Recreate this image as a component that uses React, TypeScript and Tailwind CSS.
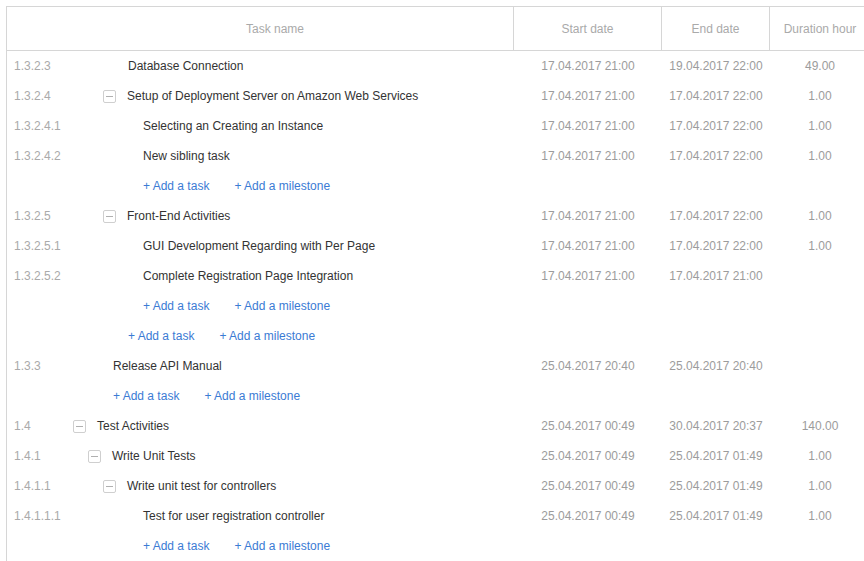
import React from "react";

type Row =
  | { kind: "task"; num: string; depth: number; parent: boolean; name: string; start: string; end: string; dur: string }
  | { kind: "add"; depth: number };

const rows: Row[] = [
  { kind: "task", num: "1.3.2.3", depth: 4, parent: false, name: "Database Connection", start: "17.04.2017 21:00", end: "19.04.2017 22:00", dur: "49.00" },
  { kind: "task", num: "1.3.2.4", depth: 4, parent: true, name: "Setup of Deployment Server on Amazon Web Services", start: "17.04.2017 21:00", end: "17.04.2017 22:00", dur: "1.00" },
  { kind: "task", num: "1.3.2.4.1", depth: 5, parent: false, name: "Selecting an Creating an Instance", start: "17.04.2017 21:00", end: "17.04.2017 22:00", dur: "1.00" },
  { kind: "task", num: "1.3.2.4.2", depth: 5, parent: false, name: "New sibling task", start: "17.04.2017 21:00", end: "17.04.2017 22:00", dur: "1.00" },
  { kind: "add", depth: 5 },
  { kind: "task", num: "1.3.2.5", depth: 4, parent: true, name: "Front-End Activities", start: "17.04.2017 21:00", end: "17.04.2017 22:00", dur: "1.00" },
  { kind: "task", num: "1.3.2.5.1", depth: 5, parent: false, name: "GUI Development Regarding with Per Page", start: "17.04.2017 21:00", end: "17.04.2017 22:00", dur: "1.00" },
  { kind: "task", num: "1.3.2.5.2", depth: 5, parent: false, name: "Complete Registration Page Integration", start: "17.04.2017 21:00", end: "17.04.2017 21:00", dur: "" },
  { kind: "add", depth: 5 },
  { kind: "add", depth: 4 },
  { kind: "task", num: "1.3.3", depth: 3, parent: false, name: "Release API Manual", start: "25.04.2017 20:40", end: "25.04.2017 20:40", dur: "" },
  { kind: "add", depth: 3 },
  { kind: "task", num: "1.4", depth: 2, parent: true, name: "Test Activities", start: "25.04.2017 00:49", end: "30.04.2017 20:37", dur: "140.00" },
  { kind: "task", num: "1.4.1", depth: 3, parent: true, name: "Write Unit Tests", start: "25.04.2017 00:49", end: "25.04.2017 01:49", dur: "1.00" },
  { kind: "task", num: "1.4.1.1", depth: 4, parent: true, name: "Write unit test for controllers", start: "25.04.2017 00:49", end: "25.04.2017 01:49", dur: "1.00" },
  { kind: "task", num: "1.4.1.1.1", depth: 5, parent: false, name: "Test for user registration controller", start: "25.04.2017 00:49", end: "25.04.2017 01:49", dur: "1.00" },
  { kind: "add", depth: 5 },
];

const spacer: Record<number, string> = {
  2: "w-0",
  3: "w-[15px]",
  4: "w-[30px]",
  5: "w-[45px]",
};

function Toggle() {
  return (
    <span className="w-[13px] h-[13px] mr-[11px] shrink-0 border border-[#cfcfcf] rounded-[2px] flex items-center justify-center">
      <span className="block w-[7px] h-px bg-[#b0b0b0]" />
    </span>
  );
}

export default function App() {
  return (
    <div
      className="w-[864px] h-[561px] overflow-hidden bg-white pt-[6px] pl-[6px] text-[12px]"
      style={{ fontFamily: '"Liberation Sans", Arial, sans-serif' }}
    >
      <div className="border-l border-t border-[#d6d6d6] h-full">
        <div className="flex h-[44px] border-b border-[#d6d6d6] text-[#aaaaaa]">
          <div className="w-[507px] shrink-0 border-r border-[#d6d6d6] flex items-center justify-center pl-[30px]">Task name</div>
          <div className="w-[148px] shrink-0 border-r border-[#d6d6d6] flex items-center justify-center">Start date</div>
          <div className="w-[108px] shrink-0 border-r border-[#d6d6d6] flex items-center justify-center">End date</div>
          <div className="w-[100px] shrink-0 flex items-center justify-center whitespace-nowrap">Duration hour</div>
        </div>
        {rows.map((r, i) => (
          <div key={i} className="flex h-[30px] items-center">
            <div className="w-[507px] shrink-0 flex items-center">
              <div className="w-[66px] shrink-0 pl-[7px] text-[#aaaaaa] whitespace-nowrap">
                {r.kind === "task" ? r.num : ""}
              </div>
              <div className={spacer[r.depth] + " shrink-0"} />
              {r.kind === "task" ? (
                r.parent ? (
                  <>
                    <Toggle />
                    <span className="text-[#333333] whitespace-nowrap">{r.name}</span>
                  </>
                ) : (
                  <span className="ml-[25px] text-[#333333] whitespace-nowrap">{r.name}</span>
                )
              ) : (
                <span className="ml-[25px] flex whitespace-nowrap text-[#3b7bd4]">
                  <span className="mr-[25px]">+ Add a task</span>
                  <span>+ Add a milestone</span>
                </span>
              )}
            </div>
            {r.kind === "task" ? (
              <>
                <div className="w-[148px] shrink-0 text-center text-[#9c9c9c]">{r.start}</div>
                <div className="w-[108px] shrink-0 text-center text-[#9c9c9c]">{r.end}</div>
                <div className="w-[100px] shrink-0 text-center text-[#9c9c9c]">{r.dur}</div>
              </>
            ) : null}
          </div>
        ))}
      </div>
    </div>
  );
}
